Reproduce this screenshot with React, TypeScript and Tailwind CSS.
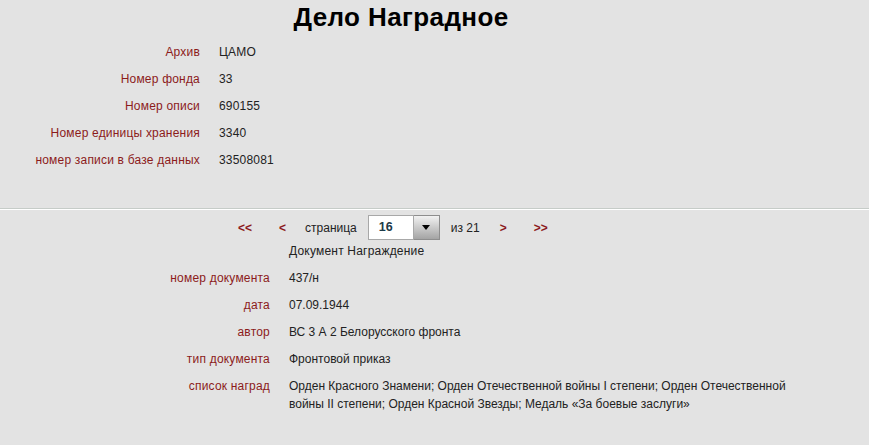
const topRows = [
  { label: "Архив", value: "ЦАМО" },
  { label: "Номер фонда", value: "33" },
  { label: "Номер описи", value: "690155" },
  { label: "Номер единицы хранения", value: "3340" },
  { label: "номер записи в базе данных", value: "33508081" },
];

const docRows = [
  { label: "номер документа", value: "437/н" },
  { label: "дата", value: "07.09.1944" },
  { label: "автор", value: "ВС 3 А 2 Белорусского фронта" },
  { label: "тип документа", value: "Фронтовой приказ" },
  {
    label: "список наград",
    value:
      "Орден Красного Знамени; Орден Отечественной войны I степени; Орден Отечественной войны II степени; Орден Красной Звезды; Медаль «За боевые заслуги»",
  },
];

function Pager() {
  return (
    <div className="flex h-[25px] items-center pl-[238px] mt-[5px] tracking-normal">
      <span className="font-bold text-[#8c1b1b] cursor-pointer">&lt;&lt;</span>
      <span className="ml-[27px] font-bold text-[#8c1b1b] cursor-pointer">&lt;</span>
      <span className="ml-[19px]">страница</span>
      <div className="ml-[11px] flex h-[25px]">
        <div className="flex w-[46px] items-center border border-[#a8a8a8] bg-white pl-[10px] text-[12.5px] font-bold text-[#1d3a48]">
          16
        </div>
        <div className="flex w-[26px] items-center justify-center border border-l-0 border-[#8e8e8e] bg-gradient-to-b from-[#f2f2f2] to-[#a4a4a4]">
          <svg width="8" height="5" viewBox="0 0 8 5">
            <path d="M0 0h8L4 5z" fill="#000" />
          </svg>
        </div>
      </div>
      <span className="ml-[11px]">из 21</span>
      <span className="ml-[20px] font-bold text-[#8c1b1b] cursor-pointer">&gt;</span>
      <span className="ml-[27px] font-bold text-[#8c1b1b] cursor-pointer">&gt;&gt;</span>
    </div>
  );
}

export default function App() {
  return (
    <div className="min-h-[445px] bg-[#e3e3e3] font-['Liberation_Sans',Arial,sans-serif] text-[12px] tracking-[0.2px] text-[#222]">
      <h1 className="h-[34px] w-[802px] text-center text-[26px] font-bold leading-[34px] tracking-[0.4px] text-black">
        Дело Наградное
      </h1>

      <div className="pt-[4px]">
        {topRows.map((r) => (
          <div key={r.label} className="flex h-[27px] items-center">
            <div className="w-[200px] text-right text-[#8c1b1b]">{r.label}</div>
            <div className="pl-[19px]">{r.value}</div>
          </div>
        ))}
      </div>

      <div className="mt-[35px] border-t border-b border-t-[#c6ccc8] border-b-white" />

      <Pager />

      <div className="flex h-[22px] items-center pl-[289px]">Документ Награждение</div>

      <div className="pt-[2px]">
        {docRows.map((r) => (
          <div key={r.label} className="flex py-[4.5px] leading-[18px]">
            <div className="w-[270px] shrink-0 text-right text-[#8c1b1b]">{r.label}</div>
            <div className="w-[539px] pl-[19px] tracking-normal">{r.value}</div>
          </div>
        ))}
      </div>
    </div>
  );
}
